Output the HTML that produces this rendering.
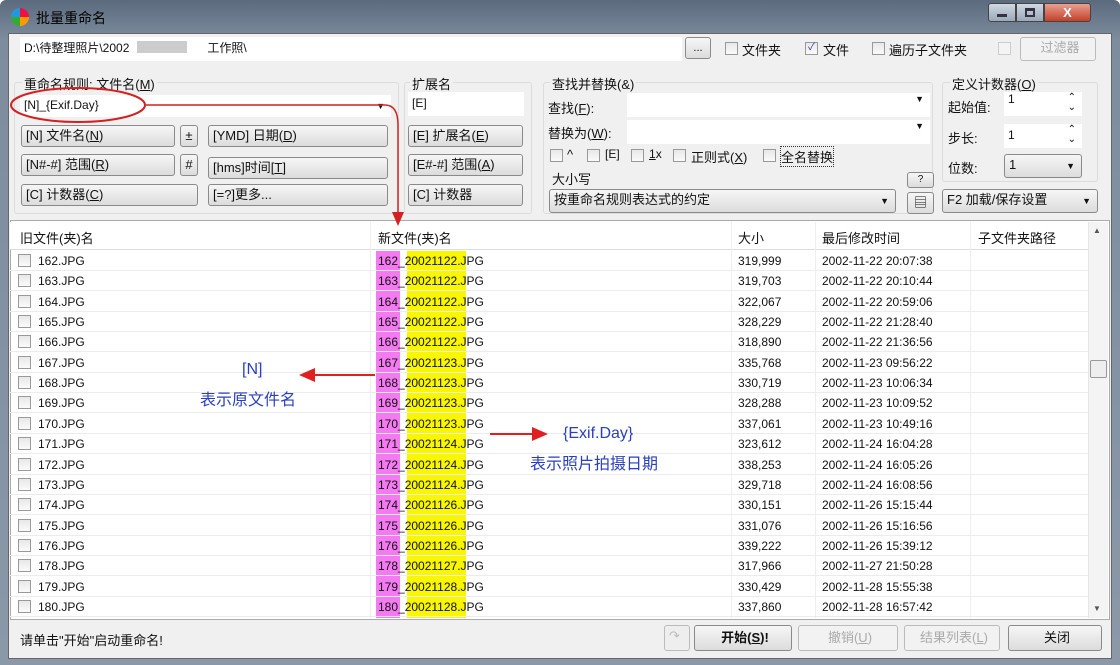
<!DOCTYPE html>
<html><head><meta charset="utf-8"><style>
*{box-sizing:border-box;margin:0;padding:0}
body{width:1120px;height:665px;overflow:hidden;background:#fff;font-family:"Liberation Sans","Noto Sans CJK SC",sans-serif;font-size:13px;color:#111;position:relative}
.a{position:absolute;white-space:nowrap}
.btn{position:absolute;border:1px solid #8a8a8a;border-radius:3px;background:linear-gradient(#f6f6f6,#dcdcdc);font-size:13px;padding-left:4px;line-height:20px;white-space:nowrap}
.inp{position:absolute;background:#fff;border:1px solid #c8c8c8;font-size:12px;padding-left:4px;white-space:nowrap}
.cb{position:absolute;width:13px;height:13px;border:1px solid #999;background:linear-gradient(#e8e8e8,#fafafa)}
.dd:after{content:"▼";position:absolute;right:6px;top:1px;font-size:9px}
.row{position:absolute;left:10px;width:1078px;height:20px;border-bottom:1px solid #ececec;font-size:12px}
.row span{position:absolute;top:3px}
.grp{position:absolute;border:1px solid #dcdcdc;border-radius:3px}
</style></head><body>
<div class="a" style="left:0;top:0;width:1120px;height:665px;background:linear-gradient(#5b6b7d,#7d8d9e 40px,#8a98a8);border-radius:6px 6px 0 0"></div>
<div class="a" style="top:8px;left:11px;width:18px;height:18px;border-radius:50%;background:conic-gradient(#e14 0 25%,#f90 0 50%,#3a3 0 75%,#29d 0)"></div>
<div class="a" style="left:36px;top:8px;font-size:14px;color:#000">批量重命名</div>
<div class="a" style="left:988px;top:3px;width:28px;height:19px;border:1px solid #444;border-radius:3px 0 0 3px;background:linear-gradient(#cfd8e2,#9aa8b8)"><div class="a" style="left:8px;top:10px;width:10px;height:3px;background:#334"></div></div>
<div class="a" style="left:1016px;top:3px;width:28px;height:19px;border:1px solid #444;background:linear-gradient(#cfd8e2,#9aa8b8)"><div class="a" style="left:8px;top:4px;width:10px;height:9px;border:2px solid #334;border-top-width:3px"></div></div>
<div class="a" style="left:1044px;top:3px;width:47px;height:19px;border:1px solid #444;border-radius:0 3px 3px 0;background:linear-gradient(#e8a090,#c4402a);color:#fff;font-weight:bold;text-align:center;line-height:17px">X</div>
<div class="a" style="left:8px;top:33px;width:1104px;height:626px;background:#f0f0f0;border:1px solid #666"></div>
<div class="inp" style="left:20px;top:37px;width:662px;height:24px;line-height:22px;border:none">D:\待整理照片\2002<span style="display:inline-block;width:50px;height:12px;background:#ccc;margin:0 20px -1px 8px"></span>工作照\</div>
<div class="btn" style="left:685px;top:37px;width:26px;height:22px;font-size:11px;padding:0;text-align:center">...</div>
<div class="cb" style="left:725px;top:42px"></div><div class="a" style="left:742px;top:40px">文件夹</div>
<div class="cb" style="left:805px;top:42px;font-size:10px;line-height:10px;text-align:center;color:#339">✓</div><div class="a" style="left:823px;top:40px">文件</div>
<div class="cb" style="left:872px;top:42px"></div><div class="a" style="left:889px;top:40px">遍历子文件夹</div>
<div class="cb" style="left:998px;top:42px;background:#f4f4f4;border-color:#ccc"></div>
<div class="btn" style="left:1020px;top:37px;width:76px;height:24px;color:#aaa;text-align:center;border-color:#bbb;background:#f2f2f2">过滤器</div>
<div class="grp" style="left:14px;top:82px;width:385px;height:132px"></div>
<div class="a" style="left:22px;top:74px;background:#f0f0f0;padding:0 2px">重命名规则: 文件名(<u>M</u>)</div>
<div class="inp dd" style="left:20px;top:95px;width:371px;height:22px;line-height:20px;border:none">[N]_{Exif.Day}</div>
<div class="btn" style="left:21px;top:125px;width:154px;height:22px">[N] 文件名(<u>N</u>)</div>
<div class="btn" style="left:180px;top:125px;width:18px;height:22px;padding:0;text-align:center">±</div>
<div class="btn" style="left:208px;top:125px;width:180px;height:22px">[YMD] 日期(<u>D</u>)</div>
<div class="btn" style="left:21px;top:154px;width:154px;height:22px">[N#-#] 范围(<u>R</u>)</div>
<div class="btn" style="left:180px;top:154px;width:18px;height:22px;padding:0;text-align:center">#</div>
<div class="btn" style="left:208px;top:157px;width:180px;height:22px">[hms]时间[<u>T</u>]</div>
<div class="btn" style="left:21px;top:184px;width:177px;height:22px">[C] 计数器(<u>C</u>)</div>
<div class="btn" style="left:208px;top:184px;width:180px;height:22px">[=?]更多...</div>
<div class="grp" style="left:404px;top:82px;width:128px;height:132px"></div>
<div class="a" style="left:410px;top:74px;background:#f0f0f0;padding:0 2px">扩展名</div>
<div class="inp" style="left:408px;top:92px;width:116px;height:24px;line-height:22px;border:none">[E]</div>
<div class="btn" style="left:408px;top:125px;width:115px;height:22px">[E] 扩展名(<u>E</u>)</div>
<div class="btn" style="left:408px;top:154px;width:115px;height:22px">[E#-#] 范围(<u>A</u>)</div>
<div class="btn" style="left:408px;top:184px;width:115px;height:22px">[C] 计数器</div>
<div class="grp" style="left:543px;top:82px;width:390px;height:132px"></div>
<div class="a" style="left:550px;top:74px;background:#f0f0f0;padding:0 2px">查找并替换(&amp;)</div>
<div class="a" style="left:548px;top:98px">查找(<u>F</u>):</div>
<div class="inp dd" style="left:627px;top:93px;width:303px;height:24px;border:none"></div>
<div class="a" style="left:548px;top:123px">替换为(<u>W</u>):</div>
<div class="inp dd" style="left:627px;top:120px;width:303px;height:24px;border:none"></div>
<div class="cb" style="left:550px;top:149px"></div><div class="a" style="left:567px;top:147px">^</div>
<div class="cb" style="left:587px;top:149px"></div><div class="a" style="left:605px;top:147px;font-size:12px">[E]</div>
<div class="cb" style="left:631px;top:149px"></div><div class="a" style="left:649px;top:147px;font-size:12px"><u>1</u>x</div>
<div class="cb" style="left:673px;top:149px"></div><div class="a" style="left:691px;top:147px">正则式(<u>X</u>)</div>
<div class="cb" style="left:763px;top:149px"></div><div class="a" style="left:781px;top:147px;outline:1px dotted #333">全名替换</div>
<div class="a" style="left:552px;top:169px">大小写</div>
<div class="btn dd" style="left:549px;top:189px;width:347px;height:24px">按重命名规则表达式的约定</div>
<div class="btn" style="left:907px;top:172px;width:27px;height:16px;padding:0;text-align:center;font-size:10px;line-height:14px">?</div>
<div class="btn" style="left:907px;top:192px;width:27px;height:22px;padding:0;text-align:center">▤</div>
<div class="grp" style="left:942px;top:82px;width:156px;height:100px"></div>
<div class="a" style="left:950px;top:74px;background:#f0f0f0;padding:0 2px">定义计数器(<u>O</u>)</div>
<div class="a" style="left:948px;top:97px">起始值:</div>
<div class="inp" style="left:1004px;top:92px;width:78px;height:24px;border:none">1<span style="position:absolute;right:6px;top:1px;font-size:10px;line-height:10px">⌃<br>⌄</span></div>
<div class="a" style="left:948px;top:128px">步长:</div>
<div class="inp" style="left:1004px;top:124px;width:78px;height:24px;line-height:22px;border:none">1<span style="position:absolute;right:6px;top:1px;font-size:10px;line-height:10px">⌃<br>⌄</span></div>
<div class="a" style="left:948px;top:158px">位数:</div>
<div class="btn dd" style="left:1004px;top:154px;width:78px;height:24px">1</div>
<div class="btn dd" style="left:942px;top:189px;width:156px;height:24px">F2 加载/保存设置</div>
<div class="a" style="left:10px;top:220px;width:1100px;height:400px;background:#fff;border:1px solid #aaa"></div>
<div class="a" style="left:10px;top:222px;width:1078px;height:28px;border-bottom:1px solid #ddd;background:#fff"></div>
<div class="a" style="left:20px;top:228px">旧文件(夹)名</div>
<div class="a" style="left:378px;top:228px">新文件(夹)名</div>
<div class="a" style="left:738px;top:228px">大小</div>
<div class="a" style="left:822px;top:228px">最后修改时间</div>
<div class="a" style="left:978px;top:228px">子文件夹路径</div>
<div class="a" style="left:370px;top:222px;width:1px;height:396px;background:#eee"></div>
<div class="a" style="left:731px;top:222px;width:1px;height:396px;background:#eee"></div>
<div class="a" style="left:815px;top:222px;width:1px;height:396px;background:#eee"></div>
<div class="a" style="left:970px;top:222px;width:1px;height:396px;background:#eee"></div>
<div class="a" style="left:1088px;top:222px;width:20px;height:396px;background:#f4f4f4;border-left:1px solid #e6e6e6"></div>
<div class="a" style="left:1093px;top:226px;font-size:8px;color:#555">▲</div>
<div class="a" style="left:1093px;top:604px;font-size:8px;color:#555">▼</div>
<div class="a" style="left:1090px;top:360px;width:17px;height:18px;border:1px solid #999;border-radius:2px;background:#eee"></div>
<div class="a" style="left:376px;top:251px;width:24px;height:367px;background:#f37af0"></div>
<div class="a" style="left:407px;top:251px;width:59px;height:367px;background:#f8f600"></div>
<div id="rows"></div>
<script>
var d=[["162","319,999","2002-11-22 20:07:38","20021122"],["163","319,703","2002-11-22 20:10:44","20021122"],["164","322,067","2002-11-22 20:59:06","20021122"],["165","328,229","2002-11-22 21:28:40","20021122"],["166","318,890","2002-11-22 21:36:56","20021122"],["167","335,768","2002-11-23 09:56:22","20021123"],["168","330,719","2002-11-23 10:06:34","20021123"],["169","328,288","2002-11-23 10:09:52","20021123"],["170","337,061","2002-11-23 10:49:16","20021123"],["171","323,612","2002-11-24 16:04:28","20021124"],["172","338,253","2002-11-24 16:05:26","20021124"],["173","329,718","2002-11-24 16:08:56","20021124"],["174","330,151","2002-11-26 15:15:44","20021126"],["175","331,076","2002-11-26 15:16:56","20021126"],["176","339,222","2002-11-26 15:39:12","20021126"],["178","317,966","2002-11-27 21:50:28","20021127"],["179","330,429","2002-11-28 15:55:38","20021128"],["180","337,860","2002-11-28 16:57:42","20021128"]];
var h="";d.forEach(function(r,i){var t=251+i*20.35;h+='<div class="row" style="top:'+t+'px"><div class="cb" style="left:8px;top:3px"></div><span style="left:28px">'+r[0]+'.JPG</span><span style="left:368px">'+r[0]+'_'+r[3]+'.JPG</span><span style="left:728px">'+r[1]+'</span><span style="left:812px">'+r[2]+'</span></div>';});
document.getElementById("rows").innerHTML=h;
</script>
<div class="a" style="left:20px;top:630px">请单击"开始"启动重命名!</div>
<div class="btn" style="left:664px;top:625px;width:26px;height:26px;background:#eee;border-color:#bbb;color:#bbb">↷</div>
<div class="btn" style="left:694px;top:625px;width:98px;height:26px;text-align:center;font-weight:bold;line-height:24px">开始(<u>S</u>)!</div>
<div class="btn" style="left:798px;top:625px;width:100px;height:26px;text-align:center;color:#aaa;border-color:#bbb;background:#f2f2f2;line-height:24px">撤销(<u>U</u>)</div>
<div class="btn" style="left:904px;top:625px;width:96px;height:26px;text-align:center;color:#aaa;border-color:#bbb;background:#f2f2f2;line-height:24px">结果列表(<u>L</u>)</div>
<div class="btn" style="left:1008px;top:625px;width:94px;height:26px;text-align:center;line-height:24px">关闭</div>
<svg class="a" style="left:0;top:0" width="1120" height="665">
<ellipse cx="78" cy="105" rx="67" ry="17" fill="none" stroke="#d42020" stroke-width="2"/>
<path d="M146 105 H385 Q398 105 398 125 V218" fill="none" stroke="#d42020" stroke-width="1.5"/>
<path d="M392 212 L398 226 L404 212 Z" fill="#d42020"/>
<path d="M375 375 H312" stroke="#e02020" stroke-width="2"/>
<path d="M315 368 L299 375 L315 382 Z" fill="#e02020"/>
<path d="M490 434 H535" stroke="#e02020" stroke-width="2"/>
<path d="M532 427 L548 434 L532 441 Z" fill="#e02020"/>
</svg>
<div class="a" style="left:242px;top:361px;color:#2a3fc0;font-size:16px">[N]</div>
<div class="a" style="left:200px;top:386px;color:#2a3fc0;font-size:16px">表示原文件名</div>
<div class="a" style="left:563px;top:425px;color:#2a3fc0;font-size:16px">{Exif.Day}</div>
<div class="a" style="left:530px;top:450px;color:#2a3fc0;font-size:16px">表示照片拍摄日期</div>
</body></html>
